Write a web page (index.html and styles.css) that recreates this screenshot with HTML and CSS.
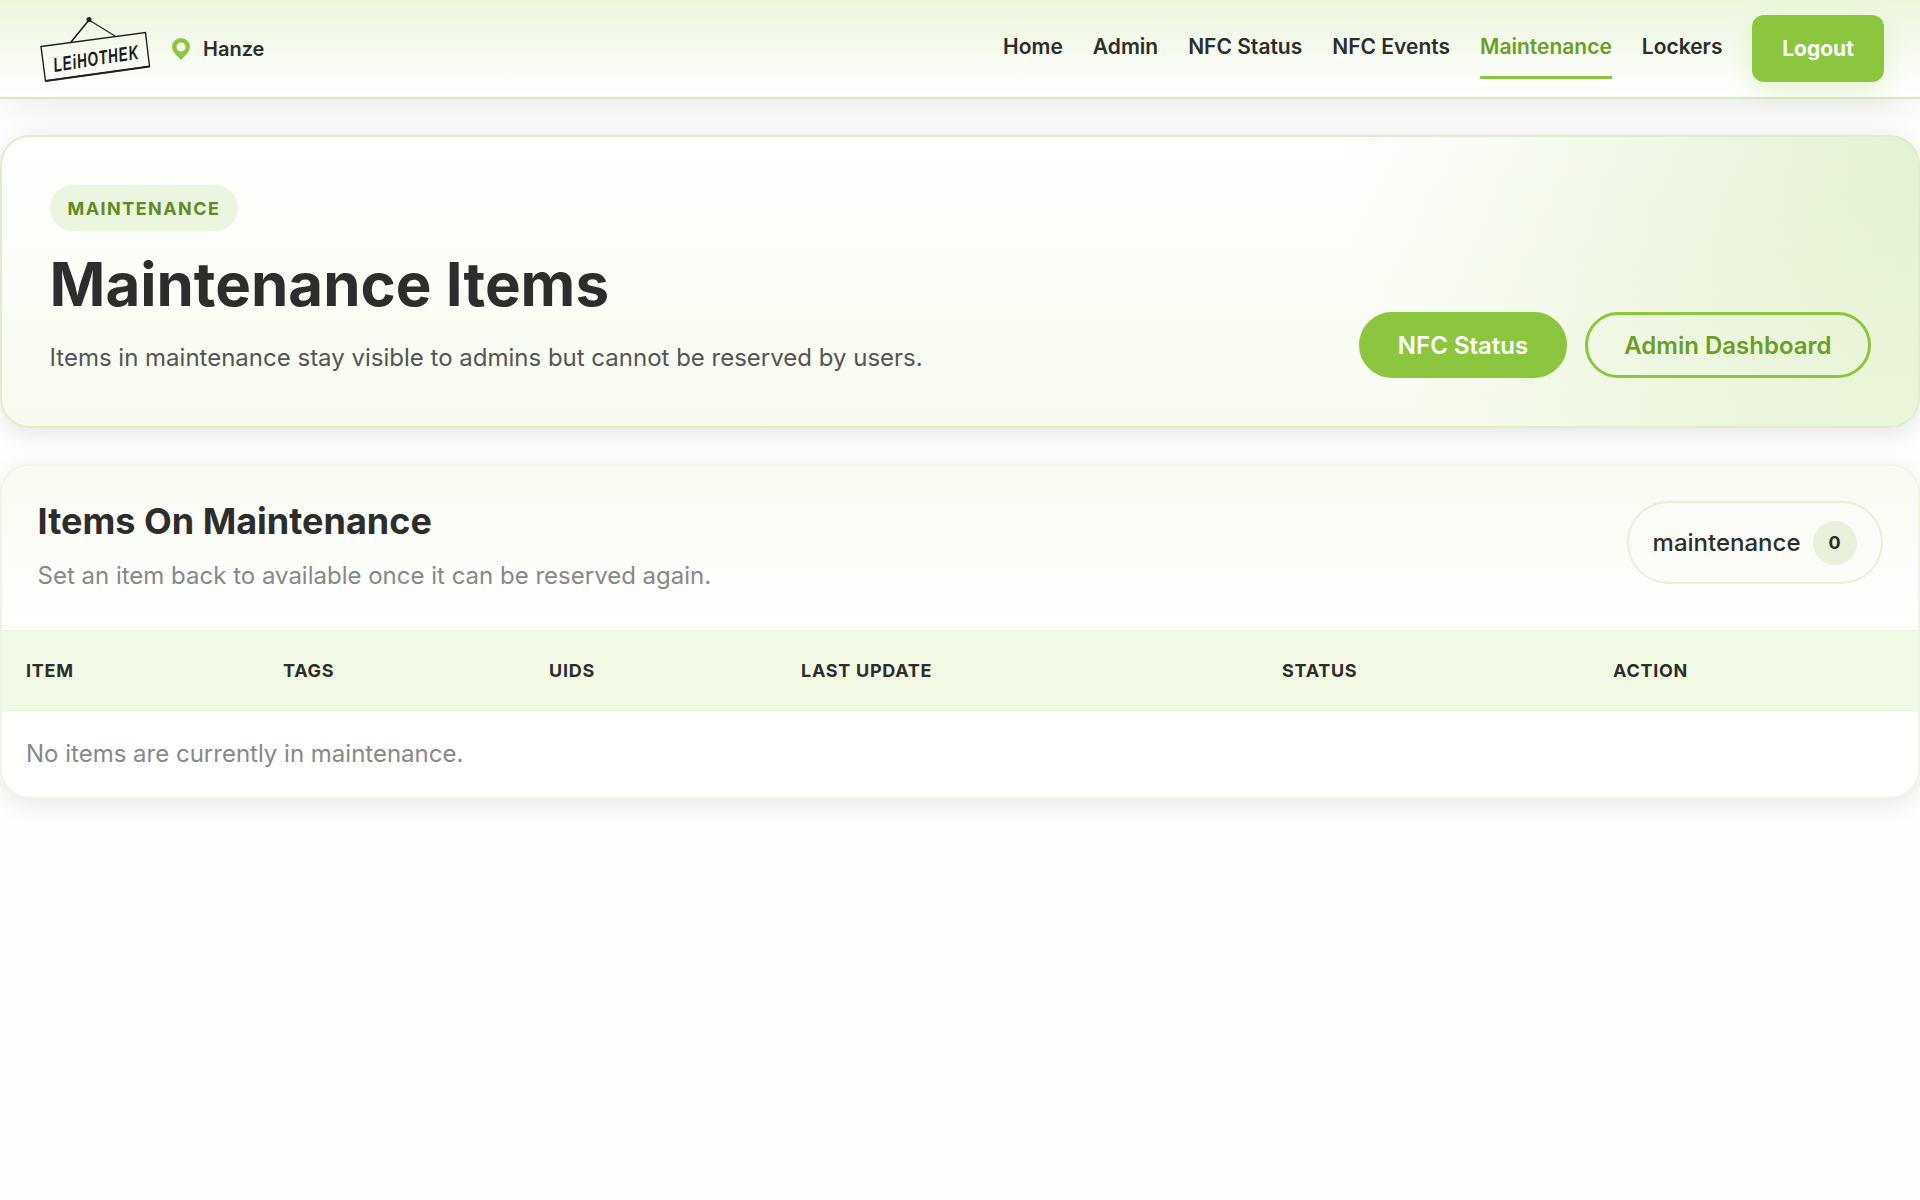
FILE: index.html
```html
<!DOCTYPE html>
<html lang="en">
<head>
    <meta charset="UTF-8">
    <meta name="viewport" content="width=device-width, initial-scale=1.0">
    <title>Maintenance Items</title>
    <link rel="stylesheet" href="styles.css">
</head>
<body>
    <header class="site-header">
        <div class="brand">
            <svg class="logo" width="114" height="70" viewBox="0 0 114 70" role="img" aria-label="Leihothek">
                <path d="M2 32.500 106.500 18.500 110.500 52.500 6.500 67Z" fill="none" stroke="#222" stroke-width="1.400"/>
                <path d="M6.500 67 110.500 52.500" stroke="#222" stroke-width="1.800"/>
                <path d="M32 28 50 6" stroke="#222" stroke-width="1.600"/>
                <path d="M50 6 76 22" stroke="#222" stroke-width="1.100"/>
                <circle cx="50" cy="5.500" r="2.500" fill="#222"/>
                <text class="logo-text" transform="translate(15.500 58) rotate(-9) scale(0.68 1)" textLength="126">LEiHOTHEK</text>
            </svg>
            <div class="location">
                <svg width="18" height="22" viewBox="0 0 18 22">
                    <path d="M9 0a9 9 0 0 0-9 9c0 5 5 8.500 9 13 4-4.500 9-8 9-13a9 9 0 0 0-9-9Zm0 4.500a4.500 4.500 0 1 1 0 9 4.500 4.500 0 0 1 0-9Z" fill="#8cc63f" fill-rule="evenodd"/>
                </svg>
                <span>Hanze</span>
            </div>
        </div>
        <nav class="main-nav">
            <a href="#">Home</a>
            <a href="#">Admin</a>
            <a href="#">NFC Status</a>
            <a href="#">NFC Events</a>
            <a href="#" class="active">Maintenance</a>
            <a href="#">Lockers</a>
            <button type="button" class="logout">Logout</button>
        </nav>
    </header>

    <main>
        <section class="hero">
            <div class="hero-text">
                <span class="badge">Maintenance</span>
                <h1>Maintenance Items</h1>
                <p>Items in maintenance stay visible to admins but cannot be reserved by users.</p>
            </div>
            <div class="hero-actions">
                <a href="#" class="btn btn-primary">NFC Status</a>
                <a href="#" class="btn btn-outline">Admin Dashboard</a>
            </div>
        </section>

        <section class="card">
            <div class="card-head">
                <div>
                    <h2>Items On Maintenance</h2>
                    <p>Set an item back to available once it can be reserved again.</p>
                </div>
                <div class="pill">maintenance <span class="count">0</span></div>
            </div>
            <table>
                <thead>
                    <tr>
                        <th class="col-item">Item</th>
                        <th class="col-tags">Tags</th>
                        <th class="col-uids">UIDs</th>
                        <th class="col-update">Last update</th>
                        <th class="col-status">Status</th>
                        <th>Action</th>
                    </tr>
                </thead>
                <tbody>
                    <tr>
                        <td colspan="6">No items are currently in maintenance.</td>
                    </tr>
                </tbody>
            </table>
        </section>
    </main>
</body>
</html>
```
FILE: styles.css
```css
* {
    box-sizing: border-box;
}
body {
    margin: 0;
    min-height: 100vh;
    font-family: Inter, "Liberation Sans", sans-serif;
    font-size: 24px;
    line-height: 1.5;
    color: #2d2d2d;
    background-color: #fefefe;
}
h1, h2, p {
    margin: 0;
}
a {
    text-decoration: none;
    color: inherit;
}

/* Header */
.site-header {
    display: flex;
    justify-content: space-between;
    align-items: center;
    height: 99px;
    padding: 0 36px 0 39px;
    border-bottom: 2px solid #d9e8c2;
    background: linear-gradient(180deg, #ecf6dd 0%, #fff 100%);
    box-shadow: 0 15px 45px -9px rgba(0, 0, 0, 0.09);
}
.brand {
    display: flex;
    align-items: center;
    gap: 19px;
}
.logo {
    display: block;
    overflow: visible;
}
.logo-text {
    font-family: "Liberation Sans", sans-serif;
    font-size: 20px;
    font-weight: bold;
    font-style: italic;
    fill: #1c1c1c;
}
.location {
    display: flex;
    align-items: center;
    gap: 13px;
    font-size: 20px;
    font-weight: 600;
}
.main-nav {
    display: flex;
    align-items: center;
    gap: 30px;
    font-size: 21px;
    font-weight: 600;
}
.main-nav a {
    padding: 13px 0 14px;
    border-bottom: 3px solid transparent;
}
.main-nav a.active {
    color: #6b9e23;
    border-bottom-color: #8cc63f;
}
.logout {
    width: 132px;
    height: 67px;
    margin-left: -0.5px;
    border: none;
    border-radius: 12px;
    background-color: #8cc63f;
    color: #fff;
    font: 700 21px Inter, sans-serif;
    box-shadow: 0 12px 27px rgba(140, 198, 63, 0.2);
}

main {
    display: flex;
    flex-direction: column;
    gap: 36px;
    padding: 36px 0 72px;
}

/* Hero */
.hero {
    display: flex;
    justify-content: space-between;
    align-items: flex-end;
    height: 293px;
    padding: 48px 47.5px;
    border: 2px solid #dfedcd;
    border-radius: 30px;
    background: radial-gradient(circle at 100% 0, rgba(140, 198, 63, 0.23), rgba(140, 198, 63, 0) 580px) border-box, linear-gradient(180deg, #fff 0%, #f7fbee 100%) border-box;
    box-shadow: 0 6px 24px rgba(0, 0, 0, 0.1);
}
.hero-text {
    align-self: flex-start;
}
.badge {
    display: block;
    width: fit-content;
    padding: 10px 18px 9px;
    border-radius: 24px;
    background-color: #ebf5e0;
    color: #5e8c1f;
    font-size: 18px;
    font-weight: 700;
    letter-spacing: 1.44px;
    text-transform: uppercase;
}
.hero h1 {
    margin: 20px 0 23px;
    font-size: 60px;
    line-height: 66px;
    font-weight: 700;
}
.hero p {
    color: #555;
}
.hero-actions {
    display: flex;
    gap: 18px;
}
.btn {
    padding: 13px 36px 11px;
    border: 3px solid #8cc63f;
    border-radius: 33px;
    font-weight: 600;
}
.btn-primary {
    background-color: #8cc63f;
    color: #fff;
}
.btn-outline {
    color: #6b9e23;
}

/* Table card */
.card {
    border: 2px solid #eff5e3;
    border-radius: 30px;
    background-color: #fff;
    box-shadow: 0 6px 24px rgba(0, 0, 0, 0.09);
    overflow: hidden;
}
.card-head {
    display: flex;
    justify-content: space-between;
    align-items: flex-start;
    height: 164px;
    padding: 34px 35.5px 35px;
    background: linear-gradient(180deg, #f8fbf1 0%, #fff 100%);
}
.card-head h2 {
    margin-bottom: 15px;
    font-size: 36px;
    line-height: 43px;
    font-weight: 700;
}
.card-head p {
    color: #888;
}
.pill {
    display: flex;
    align-items: center;
    gap: 12px;
    height: 83px;
    margin-top: 1px;
    padding: 0 24px;
    border: 2px solid #e8efda;
    border-radius: 42px;
    background-color: #fbfcf8;
    font-weight: 500;
}
.count {
    width: 44px;
    height: 44px;
    border-radius: 50%;
    background-color: #e9f1da;
    font-size: 18px;
    font-weight: 700;
    line-height: 44px;
    text-align: center;
}
table {
    width: 100%;
    table-layout: fixed;
    border-collapse: collapse;
}
th {
    height: 80px;
    padding: 0 24px;
    border-top: 1px solid #ebf2dd;
    border-bottom: 1px solid #ebf2dd;
    background-color: #f2f9e4;
    font-size: 18px;
    font-weight: 700;
    letter-spacing: 0.72px;
    text-align: left;
    text-transform: uppercase;
}
td {
    height: 86px;
    padding: 0 24px;
    color: #888;
}
.col-item {
    width: 257px;
}
.col-tags {
    width: 266px;
}
.col-uids {
    width: 252px;
}
.col-update {
    width: 481px;
}
.col-status {
    width: 331px;
}
```
